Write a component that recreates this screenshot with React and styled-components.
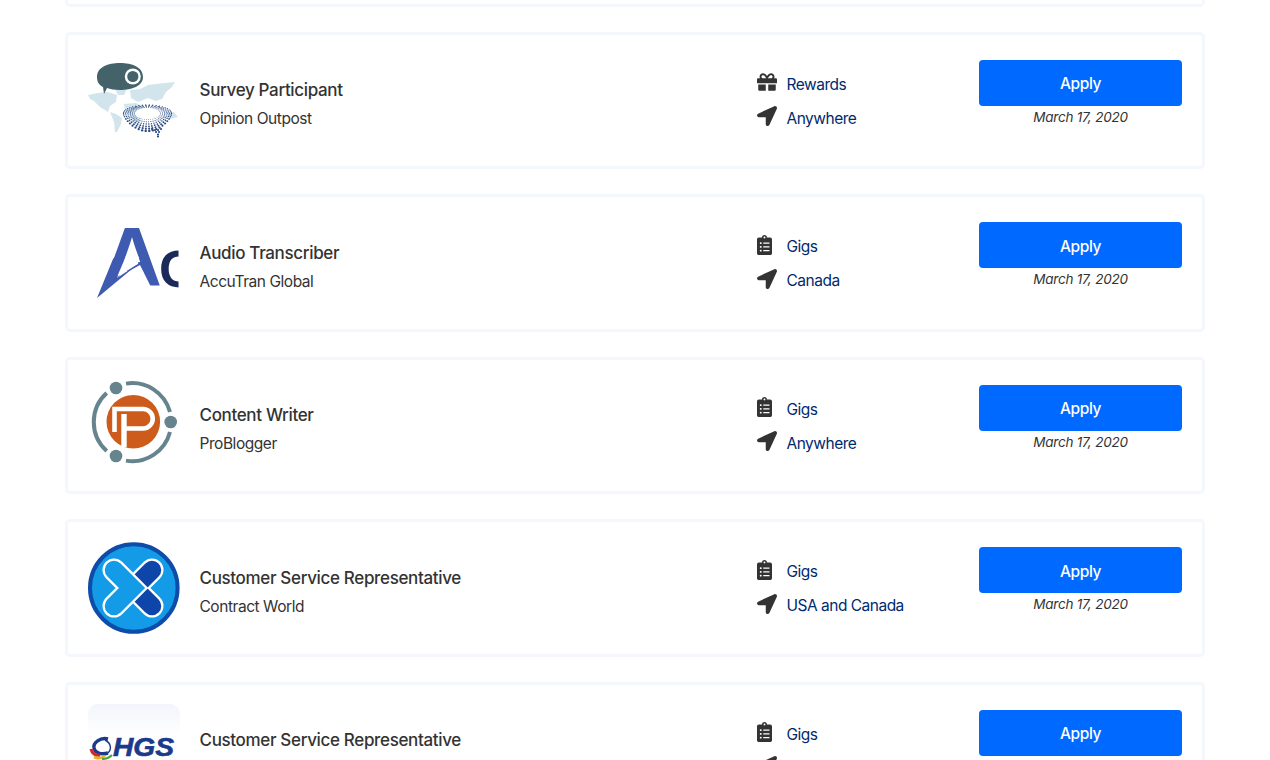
import React from "react";
import styled, { createGlobalStyle } from "styled-components";
import { FaGift, FaClipboardList, FaLocationArrow } from "react-icons/fa";

const Global = createGlobalStyle`
  html, body { margin: 0; padding: 0; background: #fff; }
  body { font-family: Inter, "Liberation Sans", sans-serif; color: #333; }
`;
const Viewport = styled.div`height: 760px; overflow: hidden;`;
const List = styled.main`
  display: flex; flex-direction: column; gap: 25px;
  margin: -131px 65px 0 65px; width: 1140px;
`;
const Card = styled.article`
  box-sizing: border-box; height: 137.5px; flex: none;
  display: flex; align-items: center;
  border: 3px solid #f4f7fc; border-radius: 5px; background: #fff;
  padding: 0 20px;
`;
const Logo = styled.div`
  flex: none; width: 92px; height: 92px; border-radius: 10px; overflow: hidden;
  background: ${p => p.$bg || "#fff"};
  svg { display: block; }
`;
const Info = styled.div`
  flex: 1; margin-left: 19.5px; padding-top: 9px; min-width: 0;
`;
const Title = styled.h3`
  margin: 0 0 8px; font-size: 17px; line-height: 21px; font-weight: 500; color: #333; letter-spacing: -0.34px;
`;
const Company = styled.div`font-size: 15.5px; line-height: 20px; color: #333; letter-spacing: -0.45px;`;
const Meta = styled.ul`
  flex: none; width: 222px; margin: 2px 0 0; padding: 0; list-style: none;
  display: flex; flex-direction: column; gap: 14px;
`;
const MetaRow = styled.li`display: flex; align-items: center; height: 20px;`;
const MetaIcon = styled.span`
  flex: none; width: 29.5px; font-size: 20px; line-height: 0; color: #333;
  position: relative; top: -2px;
  svg { display: block; }
`;
const MetaLink = styled.a`font-size: 15.5px; color: #002a6e; text-decoration: none; letter-spacing: -0.5px;`;
const Action = styled.div`
  flex: none; width: 203px; align-self: flex-start; margin-top: 25px;
  display: flex; flex-direction: column; align-items: center;
`;
const ApplyButton = styled.button`
  width: 100%; height: 46px; border: 0; border-radius: 4px; background: #0069ff; padding: 2px 0 0;
  color: #fff; font: 500 15.5px Inter, "Liberation Sans", sans-serif; letter-spacing: -0.4px; cursor: pointer;
`;
const PostDate = styled.em`font-size: 13.5px; line-height: 22px; color: #333; letter-spacing: -0.2px;`;

const stadiumDots = [];
for (let row = 0; row < 6; row++) {
  const count = 42;
  for (let i = 0; i < count; i++) {
    const a = (i / count) * Math.PI * 2;
    const lower = Math.max(0, Math.sin(a));
    const spread = row / 5;
    const x = 59.5 + Math.cos(a) * (13 + spread * 11);
    const y = 59.5 + Math.sin(a) * (6 + spread * (2.5 + lower * 9));
    const r = 0.4 + spread * (0.25 + lower * 0.55);
    stadiumDots.push({ x, y, r, key: `${row}-${i}` });
  }
}
const tailDots = [[64, 75], [67, 76], [70, 76], [73, 75], [68, 78], [71, 78], [70, 80.5], [70, 82.5]];

const SurveyLogo = () => (
  <svg width="92" height="92" viewBox="0 0 92 92">
    <defs><filter id="soft"><feGaussianBlur stdDeviation="0.7" /></filter></defs>
    <g fill="#d3e5ec" filter="url(#soft)">
      <path d="M0 41 L10 39 L20 38 L29 41 L28 48 L22 52 L20 58 L12 53 L6 47 L2 45Z" />
      <path d="M22 58 L28 60 L34 64 L33 70 L29 78 L27 78 L26 68Z" />
      <path d="M27 35 L35 32 L39 35 L36 41 L30 41Z" />
      <path d="M42 36 L52 35 L60 31 L76 29 L87 28 L84 33 L78 38 L74 45 L68 47 L60 44 L50 48 L43 44Z" />
      <path d="M36 50 L48 49 L58 54 L55 62 L50 70 L46 70 L43 60 L37 56Z" />
      <path d="M79 60 L86 58 L90 63 L82 65Z" />
    </g>
    <path d="M9 23 C9 13 20 9 32 9 C44 9 55 13 55 23 C55 32 44 36 32 36 C27 36 22 35 19 34 L16 40 L15 33 C11 31 9 28 9 23Z" fill="#43626a" />
    <circle cx="44.8" cy="22.5" r="8" fill="#fff" />
    <circle cx="44.8" cy="22.5" r="5.6" fill="#43626a" />
    <ellipse cx="59.5" cy="59.5" rx="13" ry="6" fill="#fff" />
    <g fill="#2a4a82">
      {stadiumDots.map(d => <circle key={d.key} cx={d.x} cy={d.y} r={d.r} />)}
      {tailDots.map(([x, y]) => <circle key={`${x}-${y}`} cx={x} cy={y} r="1.1" />)}
    </g>
  </svg>
);

const AccuLogo = () => (
  <svg width="92" height="92" viewBox="0 0 92 92">
    <defs><clipPath id="accuClip"><rect x="0" y="0" width="90.5" height="92" /></clipPath></defs>
    <text x="14" y="69" fontFamily="Liberation Sans" fontWeight="700" fontSize="83" fill="#3f5bb1">A</text>
    <polygon points="10,72 31,72 56,72 64,72 52,48 30,60 13,76" fill="#fff" />
    <polygon points="44,25 29,60 50,47 51,41" fill="#fff" />
    <polygon points="9,81 25,42 36,30 29,61 50,47" fill="#3f5bb1" />
    <g clipPath="url(#accuClip)">
      <text x="71" y="69.5" fontFamily="Liberation Sans" fontWeight="700" fontSize="52" fill="#1b2a58">CC</text>
    </g>
  </svg>
);

const BloggerLogo = () => (
  <svg width="92" height="92" viewBox="0 0 92 92">
    <g fill="none" stroke="#66848e" strokeWidth="4">
      <path d="M38 4.6 A39 39 0 0 1 82 33" />
      <path d="M82 53 A39 39 0 0 1 38 81.6" />
      <path d="M18.7 14 A39 39 0 0 0 18.7 72" />
    </g>
    <g fill="#66848e">
      <circle cx="28" cy="9" r="6.3" />
      <circle cx="82.7" cy="43" r="6.3" />
      <circle cx="28" cy="77" r="6.3" />
    </g>
    <circle cx="45.3" cy="42.7" r="26.8" fill="#cd5c1c" />
    <g fill="none" stroke="#fff">
      <path d="M26.5 53 V30 H55 A9.75 9.75 0 0 1 55 49.5 H36" strokeWidth="4.6" />
      <path d="M36 68 V35" strokeWidth="5.4" />
    </g>
  </svg>
);

const CrossLogo = () => (
  <svg width="92" height="92" viewBox="0 0 92 92">
    <circle cx="45.8" cy="46" r="43.8" fill="#149be8" stroke="#0d4ca8" strokeWidth="4" />
    <g fill="none" strokeLinecap="round" strokeLinejoin="miter">
      <path d="M64 28 L46 46 L64 64" stroke="#fff" strokeWidth="23" />
      <path d="M64 28 L46 46 L64 64" stroke="#0d45a8" strokeWidth="18.5" />
      <path d="M26 28 L44 46 L26 64" stroke="#fff" strokeWidth="23" />
      <path d="M26 28 L44 46 L26 64" stroke="#149be8" strokeWidth="18.5" />
    </g>
  </svg>
);

const HgsLogo = () => (
  <svg width="92" height="92" viewBox="0 0 92 92">
    <path d="M20 35 C12 33 5 39 6 44 C7 49 13 51 20 49" fill="none" stroke="#1c3a8c" strokeWidth="3.4" />
    <path d="M17 36 C23 39 24 45 20 49" fill="none" stroke="#1c3a8c" strokeWidth="1.4" />
    <path d="M3 45 C4 50 8 52 12 51" fill="none" stroke="#d1262b" strokeWidth="3.2" />
    <path d="M6 53 C10 55 14 54 17 52" fill="none" stroke="#e7b21e" strokeWidth="2.6" />
    <path d="M14 55 C18 55 21 54 24 51" fill="none" stroke="#4ba63d" strokeWidth="2.2" />
    <text x="25" y="52" fontFamily="Liberation Sans" fontWeight="700" fontStyle="italic" fontSize="26" textLength="61" lengthAdjust="spacingAndGlyphs" fill="#1c3a8c" stroke="#1c3a8c" strokeWidth="0.6">HGS</text>
  </svg>
);

const icons = { gift: FaGift, gigs: FaClipboardList };
const jobs = [
  { title: "Survey Participant", company: "Opinion Outpost", kind: "gift", type: "Rewards", place: "Anywhere", logo: <SurveyLogo /> },
  { title: "Audio Transcriber", company: "AccuTran Global", kind: "gigs", type: "Gigs", place: "Canada", logo: <AccuLogo /> },
  { title: "Content Writer", company: "ProBlogger", kind: "gigs", type: "Gigs", place: "Anywhere", logo: <BloggerLogo /> },
  { title: "Customer Service Representative", company: "Contract World", kind: "gigs", type: "Gigs", place: "USA and Canada", logo: <CrossLogo /> },
  { title: "Customer Service Representative", company: "HGS", kind: "gigs", type: "Gigs", place: "Anywhere", logo: <HgsLogo />, bg: "linear-gradient(#f2f5fb 0, #fff 30px)" },
];

const JobCard = ({ job }) => {
  const TypeIcon = icons[job.kind];
  return (
    <Card>
      <Logo $bg={job.bg}>{job.logo}</Logo>
      <Info>
        <Title>{job.title}</Title>
        <Company>{job.company}</Company>
      </Info>
      <Meta>
        <MetaRow><MetaIcon><TypeIcon preserveAspectRatio="xMinYMid" /></MetaIcon><MetaLink href="#">{job.type}</MetaLink></MetaRow>
        <MetaRow><MetaIcon><FaLocationArrow /></MetaIcon><MetaLink href="#">{job.place}</MetaLink></MetaRow>
      </Meta>
      <Action>
        <ApplyButton>Apply</ApplyButton>
        <PostDate>March 17, 2020</PostDate>
      </Action>
    </Card>
  );
};

export default function App() {
  return (
    <Viewport>
      <Global />
      <List>
        <Card />
        {jobs.map((job, i) => <JobCard key={i} job={job} />)}
      </List>
    </Viewport>
  );
}
